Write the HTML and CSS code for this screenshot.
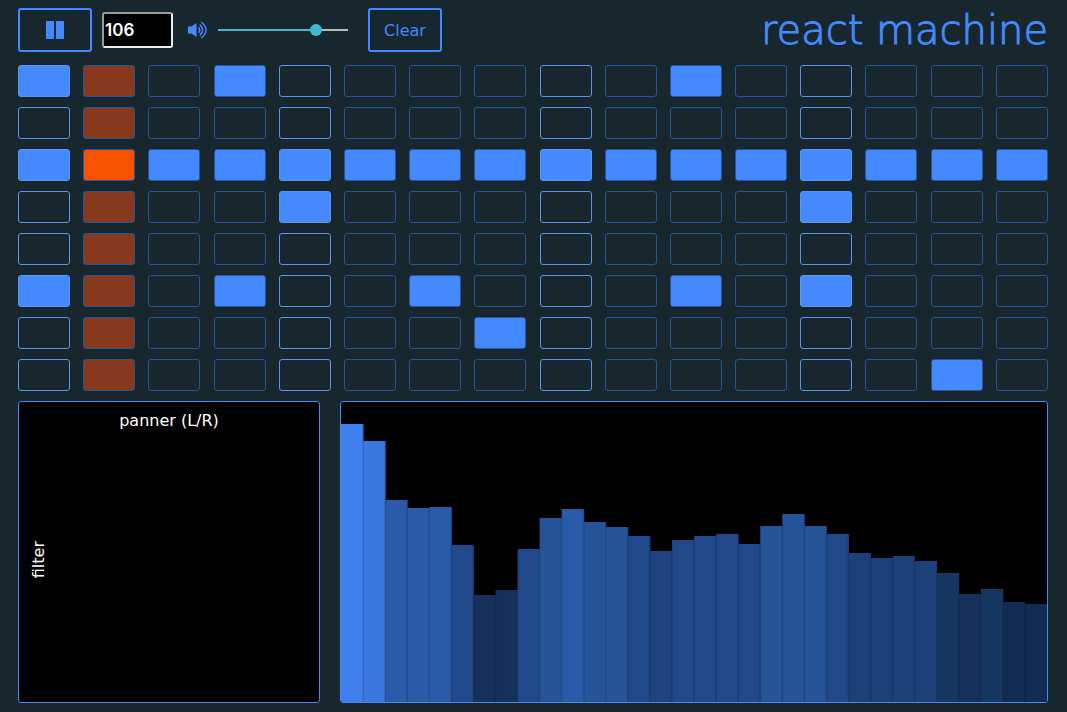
FILE: index.html
```
<!DOCTYPE html>
<html lang="en">
<head>
<meta charset="utf-8">
<title>react machine</title>
<link rel="stylesheet" href="styles.css">
</head>
<body>
<main class="machine">
  <header class="toolbar">
    <button class="button" type="button" aria-label="Pause">
      <svg class="pause-icon" viewBox="0 0 18 18" aria-hidden="true">
        <rect width="8" height="18" rx="0.6"/><rect x="10" width="8" height="18" rx="0.6"/>
      </svg>
    </button>
    <input class="tempo" type="text" inputmode="numeric" value="106" aria-label="Tempo">
    <label class="volume">
      <svg class="volume-icon" viewBox="0 0 20 18" role="img" aria-label="Volume">
        <path class="speaker" d="M0 5.5H3.5L8.5 2V16L3.5 12.4H0Z"/>
        <path class="wave" d="M10.4 6.2Q13.2 9 10.4 11.8M11.8 3.6Q17.4 9 11.8 14.4M13.2 1Q23 9 13.2 17"/>
      </svg>
      <input class="slider" type="range" min="0" max="100" value="78">
    </label>
    <button class="button" type="button">Clear</button>
    <h1 class="title">react machine</h1>
  </header>
  <section class="sequencer" id="sequencer" aria-label="Sequencer"></section>
  <section class="panels">
    <div class="pad">
      <span class="pad-x">panner (L/R)</span>
      <span class="pad-y">filter</span>
    </div>
    <svg class="spectrum" id="spectrum" viewBox="0 0 706 300" preserveAspectRatio="none" role="img" aria-label="Frequency spectrum"></svg>
  </section>
</main>
<script src="app.js"></script>
</body>
</html>
```
FILE: styles.css
```
* {
  box-sizing: border-box;
}

body {
  margin: 0;
  background: #18262d;
  color: #4489ff;
  font-family: "DejaVu Sans", sans-serif;
  font-size: 16px;
}

.machine {
  display: flex;
  flex-direction: column;
  gap: 10px;
  padding: 8px 19px 9px 18px;
}

.toolbar {
  display: flex;
  align-items: center;
  height: 44px;
  margin-bottom: 3px;
}

.button {
  display: flex;
  align-items: center;
  justify-content: center;
  width: 74px;
  height: 44px;
  padding: 0;
  border: 2px solid #4489ff;
  border-radius: 3px;
  background: transparent;
  color: #4489ff;
  font-family: inherit;
  font-size: 16px;
}

.pause-icon {
  width: 18px;
  height: 18px;
  fill: #4489ff;
}

.tempo {
  width: 71px;
  height: 36px;
  margin: 0 15px 0 10px;
  padding: 1px;
  border: 2px solid;
  border-color: #9a9a9a #eeeeee #eeeeee #9a9a9a;
  border-radius: 3px;
  background: #000;
  color: #fff;
  font: 600 17px Inter, sans-serif;
}

.volume {
  display: flex;
  align-items: center;
  gap: 10px;
  margin-right: 20px;
}

.volume-icon {
  width: 20px;
  height: 18px;
}

.speaker {
  fill: #4489ff;
}

.wave {
  fill: none;
  stroke: #4489ff;
  stroke-width: 1.5;
}

.slider {
  appearance: none;
  width: 130px;
  height: 12px;
  margin: 0;
  background: linear-gradient(90deg, #3db8d8 76%, #bbbbbd 76%) center / 100% 2px no-repeat;
}

.slider::-webkit-slider-thumb {
  appearance: none;
  width: 12px;
  height: 12px;
  border-radius: 50%;
  background: #3db8d8;
}

.title {
  margin: 0 0 0 auto;
  font-size: 40px;
  font-weight: 200;
  line-height: 44px;
  white-space: nowrap;
  -webkit-text-stroke: 1px #4489ff;
}

.sequencer {
  display: flex;
  flex-direction: column;
  gap: 10px;
}

.track {
  display: flex;
  justify-content: space-between;
}

.step {
  min-width: 24px;
  flex: 0 1 52px;
  height: 32px;
  padding: 0;
  border: 1px solid #24559c;
  border-radius: 3px;
  background: transparent;
}

.step.beat {
  border-color: #5596ee;
}

.step.on {
  background: #4489ff;
}

.step.current {
  background: #87391e;
}

.step.current.on {
  background: #f75200;
}

.panels {
  display: flex;
  gap: 20px;
  height: 302px;
}

.pad,
.spectrum {
  border: 1px solid #4489ff;
  border-radius: 3px;
  background: #000;
}

.pad {
  display: grid;
  grid-template-rows: 36px 1fr 20px;
  flex: 0 0 302px;
  color: #fff;
}

.pad-x {
  align-self: center;
  text-align: center;
}

.pad-y {
  align-self: center;
  margin-left: 10px;
  writing-mode: vertical-rl;
  transform: rotate(180deg);
  justify-self: start;
}

.spectrum {
  flex: 1;
  min-width: 0;
  height: 302px;
}

.seam {
  fill: #000;
  opacity: 0.1;
}
```
FILE: app.js
```
const STEPS = 16;
const CURRENT = 1;
const pattern = [
  [0, 3, 10],
  [],
  [0, 1, 2, 3, 4, 5, 6, 7, 8, 9, 10, 11, 12, 13, 14, 15],
  [4, 12],
  [],
  [0, 3, 6, 10, 12],
  [7],
  [14]
];

const sequencer = document.getElementById("sequencer");
pattern.forEach((active, row) => {
  const track = document.createElement("div");
  track.className = "track";
  for (let i = 0; i < STEPS; i++) {
    const step = document.createElement("button");
    const on = active.includes(i);
    step.type = "button";
    step.className = "step" + (i % 4 === 0 ? " beat" : "") + (on ? " on" : "") + (i === CURRENT ? " current" : "");
    step.setAttribute("aria-label", `Track ${row + 1}, step ${i + 1}`);
    step.setAttribute("aria-pressed", on);
    track.append(step);
  }
  sequencer.append(track);
});

const levels = [
  [278, "#3f7fee"], [261, "#3a77df"], [202, "#2a5ba8"], [194, "#2a5ba8"],
  [195, "#2a5ba8"], [157, "#20488a"], [107, "#15315b"], [112, "#15315b"],
  [153, "#20488a"], [184, "#265499"], [193, "#295aa9"], [180, "#265499"],
  [175, "#265499"], [166, "#20488a"], [151, "#20427f"], [162, "#20488a"],
  [166, "#20488a"], [168, "#20488a"], [158, "#20488a"], [176, "#265499"],
  [188, "#265499"], [176, "#265499"], [168, "#20488a"], [149, "#1d4079"],
  [144, "#1d4079"], [146, "#1d4079"], [141, "#1d4079"], [129, "#173763"],
  [108, "#15315b"], [113, "#173763"], [100, "#112c52"], [98, "#112c52"]
];

const spectrum = document.getElementById("spectrum");
const barWidth = 706 / levels.length;

function addRect(x, height, width, fill) {
  const rect = document.createElementNS("http://www.w3.org/2000/svg", "rect");
  rect.setAttribute("x", x);
  rect.setAttribute("y", 300 - height);
  rect.setAttribute("width", width);
  rect.setAttribute("height", height);
  if (fill) rect.setAttribute("fill", fill);
  else rect.setAttribute("class", "seam");
  spectrum.append(rect);
}

levels.forEach(([height, color], i) => {
  addRect(i * barWidth, height, barWidth + 0.5, color);
});
levels.slice(1).forEach(([height], i) => {
  addRect((i + 1) * barWidth - 1, Math.max(height, levels[i][0]), 2);
});
```
